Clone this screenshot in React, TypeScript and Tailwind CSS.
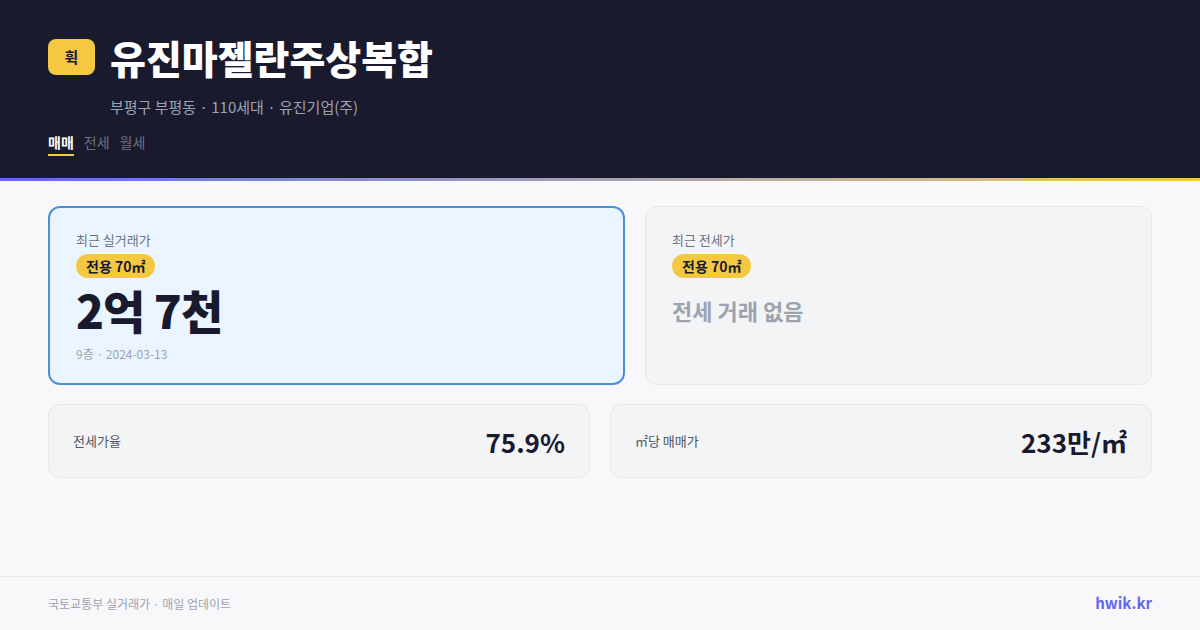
export default function App() {
  const font = { fontFamily: '"Noto Sans CJK KR", "Noto Sans", sans-serif' };
  return (
    <div className="w-[1200px] h-[630px] flex flex-col bg-[#f8f8fa] overflow-hidden" style={font}>
      {/* Header */}
      <header className="bg-[#1a1a2e] px-12 pt-[39px] h-[178px]">
        <div className="flex items-center gap-[15px]">
          <div className="w-[47px] h-[36px] rounded-lg bg-[#f5c842] flex items-center justify-center text-[15px] font-bold text-[#1a1a2e]">
            휙
          </div>
          <h1 className="text-[39px] leading-[36px] font-black text-white">유진마젤란주상복합</h1>
        </div>
        <p className="pl-[62px] mt-[22px] text-[15px] leading-5 text-[#9ca3af]">
          부평구 부평동 · 110세대 · 유진기업(주)
        </p>
        <div className="flex gap-[10px] mt-[15px] text-[14px] leading-5">
          <span className="text-white font-bold pb-[2px] border-b-2 border-[#f5c842]">매매</span>
          <span className="text-[#6b7280]">전세</span>
          <span className="text-[#6b7280]">월세</span>
        </div>
      </header>
      <div className="h-[3px] bg-gradient-to-r from-[#6366f1] to-[#f5c842]" />

      {/* Body */}
      <main className="flex-1 px-12 pt-[25px]">
        <div className="grid grid-cols-[577px_1fr] gap-5">
          <div className="h-[179px] rounded-xl border-2 border-[#4a90d9] bg-[#ebf5ff] px-[26px] pt-[22px]">
            <div className="text-[13px] leading-5 text-[#6b7280]">최근 실거래가</div>
            <span className="inline-block mt-[4px] rounded-full bg-[#f5c842] px-[10px] text-[14px] leading-6 font-bold text-[#1a1a2e]">
              전용 70㎡
            </span>
            <div className="mt-[5px] text-[46px] leading-[52px] font-black text-[#1a1a2e] tracking-[-1px]">2억 7천</div>
            <div className="mt-[11px] text-[12px] leading-4 text-[#9ca3af]">9층 · 2024-03-13</div>
          </div>
          <div className="h-[179px] rounded-xl border border-[#e5e7eb] bg-[#f3f4f6] px-[26px] pt-[23px]">
            <div className="text-[13px] leading-5 text-[#6b7280]">최근 전세가</div>
            <span className="inline-block mt-[4px] rounded-full bg-[#f5c842] px-[10px] text-[14px] leading-6 font-bold text-[#1a1a2e]">
              전용 70㎡
            </span>
            <div className="mt-[18px] text-[22px] leading-7 font-bold text-[#9ca3af]">전세 거래 없음</div>
          </div>
        </div>

        <div className="grid grid-cols-2 gap-5 mt-[19px]">
          <div className="h-[74px] rounded-xl border border-[#e5e7eb] bg-[#f3f4f6] px-6 flex items-center justify-between">
            <span className="text-[13px] text-[#4b5563]">전세가율</span>
            <span className="text-[26px] font-bold text-[#1a1a2e]">75.9%</span>
          </div>
          <div className="h-[74px] rounded-xl border border-[#e5e7eb] bg-[#f3f4f6] px-6 flex items-center justify-between">
            <span className="text-[13px] text-[#4b5563]">㎡당 매매가</span>
            <span className="text-[26px] font-bold text-[#1a1a2e]">233만/㎡</span>
          </div>
        </div>
      </main>

      {/* Footer */}
      <footer className="h-[54px] border-t border-[#e5e7eb] px-12 flex items-center justify-between">
        <span className="text-[12px] text-[#9ca3af]">국토교통부 실거래가 · 매일 업데이트</span>
        <span className="text-[15px] font-bold text-[#6366f1]">hwik.kr</span>
      </footer>
    </div>
  );
}
